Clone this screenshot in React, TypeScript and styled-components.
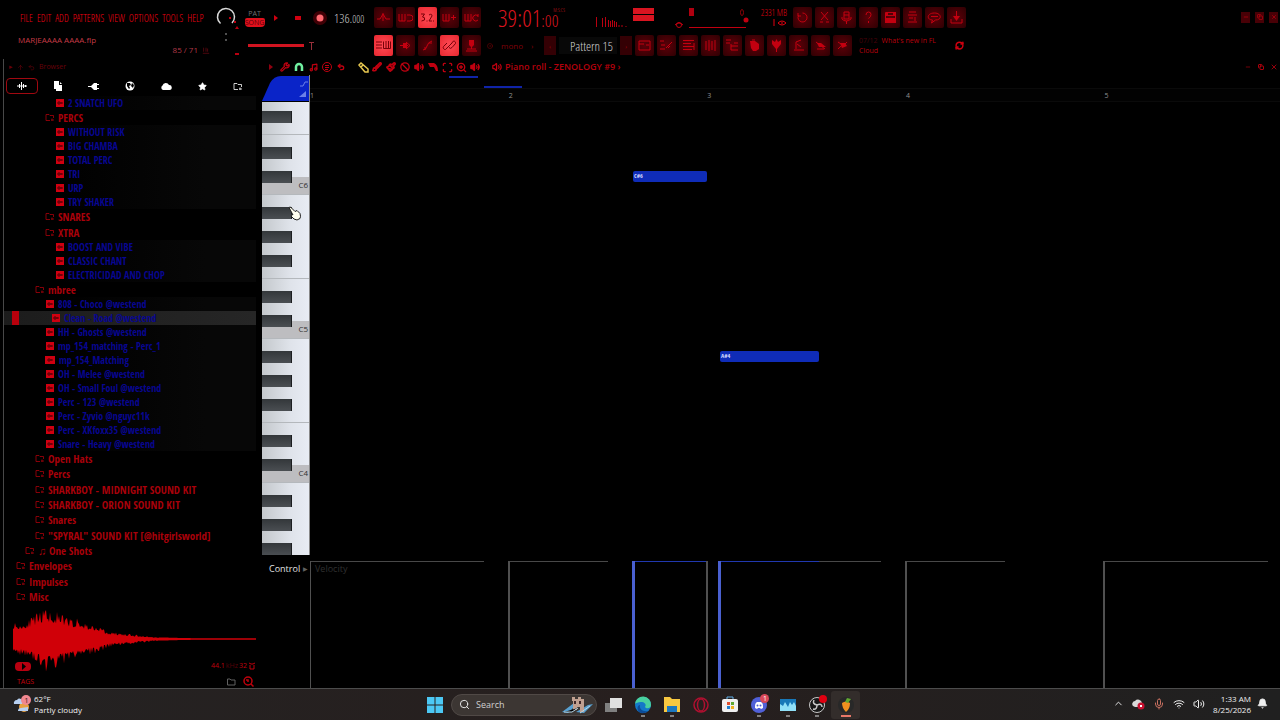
import React from "react";
import styled, { createGlobalStyle } from "styled-components";
import {
  ArrowUp, Ban, Bell, Brush, ChevronUp, Copy, Globe, Mic, Minus, Music, Paintbrush, RefreshCw, Scan, Search,
  Star, Undo2, Volume2, Wifi, Wrench, X, ZoomIn, CircleDot,
} from "lucide-react";

const NARROW = '"Open Sans Condensed Light", "Open Sans Condensed", "Liberation Sans Narrow", sans-serif';
const NARROW_BOLD = '"Open Sans Condensed", "Liberation Sans Narrow", sans-serif';
const UI = '"Open Sans", "Noto Sans", sans-serif';

const GlobalStyle = createGlobalStyle`
  * { box-sizing: border-box; }
  body { margin: 0; background: #000; font-family: ${NARROW}; font-weight: 300; }
  button { margin: 0; padding: 0; border: 0; background: none; color: inherit; font: inherit; cursor: pointer; }
  ul { margin: 0; padding: 0; list-style: none; }
  svg { display: block; flex: none; }
`;

const Page = styled.div`
  display: flex;
  flex-direction: column;
  min-height: 100vh;
  overflow: hidden;
  background: #000;
  color: #c0000c;
`;

/* ---------- header ---------- */

const Header = styled.header`
  display: flex;
  height: 59px;
  flex: none;
`;

const TitleBlock = styled.div`
  width: 212px;
  padding: 10px 0 0 20px;
`;

const Menu = styled.nav`
  display: flex;
  gap: 4px;
  height: 15px;
  align-items: center;
  color: #f00012;
  font-size: 10px;
  white-space: nowrap;
`;

const ProjectName = styled.div`
  margin: 9px 0 0 -2px;
  font: 8px/12px ${UI};
  color: #c43a46;
`;

const Hint = styled.div`
  display: flex;
  justify-content: flex-end;
  align-items: center;
  gap: 4px;
  padding-right: 2px;
  margin-top: -2px;
  font: 8px/12px ${UI};
  color: #b03848;
`;

const Transport = styled.div`
  display: flex;
  flex-direction: column;
  gap: 7px;
  width: 132px;
  padding: 7px 0 0 2px;
`;

const TransportRow = styled.div`
  display: flex;
  align-items: center;
  height: 21px;
`;

const ModeSwitch = styled.button`
  display: flex;
  flex-direction: column;
  align-items: center;
  width: 21px;
  font: 7px/9px ${UI};
  color: #707070;
`;

const ModeOn = styled.span`
  width: 20px;
  border-radius: 2px 2px 4px 4px;
  background: #e0101c;
  color: #5c0008;
`;

const RoundButton = styled.button`
  display: grid;
  place-items: center;
  width: 22px;
  height: 20px;
  color: #d00010;
`;

const Tempo = styled.div`
  margin-left: 3px;
  color: #c8c8c8;
  font-size: 13px;
  small { font-size: 10px; }
`;

const PitchSlider = styled.input`
  appearance: none;
  width: 56px;
  height: 3px;
  margin: 0 4px 0 4px;
  background: #d01420;
  &::-webkit-slider-thumb { appearance: none; width: 1px; height: 3px; background: #d01420; }
`;

const ToolGrid = styled.div`
  display: grid;
  grid-template-columns: repeat(5, 19px);
  grid-auto-rows: 21px;
  gap: 7px 3px;
  padding-top: 7px;
  width: 111px;
`;

const ToolButton = styled.button<{ $on?: boolean }>`
  display: grid;
  place-items: center;
  width: 19px;
  height: 21px;
  border-radius: 2px;
  color: ${(p) => (p.$on ? "#780008" : "#c40010")};
  background: ${(p) =>
    p.$on ? "radial-gradient(#ff4a54, #e82830)" : "radial-gradient(#5c0008, #2e0003)"};
`;

const Panels = styled.div`
  display: flex;
  flex-direction: column;
  gap: 7px;
  padding-top: 7px;
`;

const PanelRow = styled.div`
  display: flex;
  align-items: center;
  height: 21px;
  gap: 3px;
`;

const Clock = styled.div`
  display: flex;
  width: 104px;
  padding-left: 13px;
  color: #d8141e;
  font-size: 24px;
  line-height: 21px;
`;

const ClockTail = styled.div`
  display: flex;
  flex-direction: column;
  small { font-size: 17px; line-height: 15px; }
  span { padding-left: 12px; font-size: 5px; line-height: 6px; }
`;

const Meter = styled.div`
  display: grid;
  gap: 1px;
  width: 21px;
  margin: 0 8px 7px 2px;
`;

const MeterBar = styled.div`
  height: 6px;
  background: #d81420;
`;

const Memory = styled.div`
  width: 35px;
  margin-right: 3px;
  text-align: right;
  white-space: nowrap;
  color: #e00010;
  font-size: 9px;
  line-height: 10px;
  svg { margin: 1px 0 0 auto; }
`;

const SnapSelect = styled.button`
  display: flex;
  align-items: center;
  gap: 8px;
  width: 56px;
  padding-left: 2px;
  color: #800008;
  font: 8px/12px ${UI};
`;

const StepButton = styled.button`
  width: 12px;
  height: 19px;
  background: #340004;
  color: #a00008;
  font-size: 8px;
`;

const PatternName = styled.button`
  width: 58px;
  height: 17px;
  padding-right: 4px;
  background: #080808;
  color: #d0d0d0;
  text-align: right;
  white-space: nowrap;
  font-size: 13px;
`;

const News = styled.div`
  width: 90px;
  padding-left: 4px;
  color: #b8000c;
  font: 7px/10px ${UI};
`;

const NewsLine = styled.div`
  display: flex;
  gap: 4px;
  white-space: nowrap;
  time { color: #48000a; }
`;

const WindowButtons = styled.div<{ $tight?: boolean }>`
  display: flex;
  align-items: center;
  gap: ${(p) => (p.$tight ? "4px" : "5px")};
  height: ${(p) => (p.$tight ? "16px" : "12px")};
  margin: ${(p) => (p.$tight ? "0 2px 0 auto" : "11px 2px 0 auto")};
  color: #e00012;
  button { width: 9px; height: 11px; display: grid; place-items: center; background: ${(p) => (p.$tight ? "none" : "#480006")}; }
`;

/* ---------- browser ---------- */

const Workspace = styled.main`
  display: flex;
  flex: 1;
`;

const Browser = styled.aside`
  display: flex;
  flex-direction: column;
  flex: none;
  width: 259px;
  margin-left: 3px;
  border-left: 1px solid #484848;
`;

const BrowserTitle = styled.div`
  display: flex;
  align-items: center;
  gap: 4px;
  height: 16px;
  padding-left: 5px;
  color: #68000a;
  font: 7px/16px ${UI};
`;

const Tabs = styled.div`
  display: flex;
  height: 21px;
  padding-top: 3px;
`;

const Tab = styled.button<{ $on?: boolean }>`
  display: grid;
  place-items: center;
  width: 32px;
  height: 16px;
  margin: 0 2px;
  border: 1px solid ${(p) => (p.$on ? "#a00810" : "transparent")};
  border-radius: 4px;
  color: #fff;
`;

const Tree = styled.ul`
  flex: 1;
  width: 252px;
`;

const Group = styled.ul<{ $height: number }>`
  display: flex;
  flex-direction: column;
  height: ${(p) => p.$height}px;
`;

const FolderRow = styled.button<{ $depth: number }>`
  display: flex;
  align-items: center;
  gap: 3px;
  width: 100%;
  height: 15px;
  padding-left: ${(p) => p.$depth}px;
  color: #a8000a;
  font: bold 11px/15px ${NARROW_BOLD};
  white-space: nowrap;
`;

const FolderItem = styled.li`
  display: flex;
  align-items: center;
  flex: 1;
`;

const FileRow = styled.button<{ $depth: number; $selected?: boolean }>`
  display: flex;
  align-items: center;
  gap: 4px;
  width: 100%;
  height: 14px;
  padding-left: ${(p) => p.$depth}px;
  background: ${(p) => (p.$selected ? "linear-gradient(90deg, #1c1c1c, #262626)" : "linear-gradient(90deg, #000 20%, #070707 80%)")};
  color: #080690;
  font: bold 10px/14px ${NARROW_BOLD};
  white-space: nowrap;
`;

const SelectMark = styled.span`
  width: 7px;
  height: 14px;
  margin-right: 29px;
  background: #b8000c;
`;

const FileBadge = styled.span<{ $wide?: boolean }>`
  display: grid;
  place-items: center;
  width: ${(p) => (p.$wide ? 10 : 8)}px;
  height: 8px;
  background: #d00010;
  color: #500006;
`;

const WavePanel = styled.div`
  padding-left: 9px;
  height: 67px;
`;

const BrowserFoot = styled.div`
  display: flex;
  align-items: center;
  gap: 7px;
  height: 16px;
  padding: 3px 8px 0 13px;
  font: 7px/12px ${UI};
  span { margin-right: auto; }
`;

const WaveInfo = styled.div`
  display: flex;
  align-items: center;
  justify-content: space-between;
  height: 10px;
  margin: -13px 0 1px;
  padding: 0 6px 0 11px;
  font: 7px/10px ${UI};
`;

const WaveRate = styled.span`
  display: flex;
  align-items: center;
  gap: 1px;
  i { color: #580008; font-style: normal; }
`;

/* ---------- piano roll ---------- */

const Roll = styled.section`
  display: flex;
  flex-direction: column;
  flex: 1;
  min-width: 0;
`;

const RollBar = styled.div`
  display: flex;
  align-items: center;
  height: 16px;
  padding-left: 2px;
  color: #c00010;
`;

const RollTool = styled.button<{ $tone?: string; $gap?: boolean }>`
  display: grid;
  place-items: center;
  width: 14px;
  height: 14px;
  margin-left: ${(p) => (p.$gap ? 8 : 0)}px;
  color: ${(p) => p.$tone || "#c00010"};
`;

const RollTitle = styled.h1`
  margin: 0 0 0 1px;
  color: #b4000c;
  font: 600 9px/14px ${UI};
  white-space: nowrap;
`;

const RollBody = styled.div`
  display: flex;
  flex: 1;
`;

const KeyColumn = styled.div`
  position: relative;
  width: 48px;
  flex: none;
  border-right: 1px solid #888;
  overflow: hidden;
`;

const Corner = styled.div`
  height: 27px;
`;

const HandCursor = styled.svg`
  position: absolute;
  top: 131px;
  left: 26px;
`;

const Keys = styled.div`
  height: 453px;
  overflow: hidden;
  background: linear-gradient(90deg, #c4c8cc, #dfe3ea 60%, #e8ecf4);
`;

const Key = styled.div<{ $kind: string; $short?: boolean }>`
  display: flex;
  align-items: center;
  justify-content: flex-end;
  height: ${(p) => (p.$short ? 9 : 12)}px;
  padding-right: 1px;
  border-bottom: ${(p) => (p.$kind === "edge" || p.$kind === "c" ? "1px solid #b4b8bc" : "0")};
  background: ${(p) =>
    p.$kind === "c" ? "#bdbdc0" : p.$kind === "sharpC" ? "linear-gradient(transparent 50%, #bdbdc0 50%)" : "none"};
  color: #303030;
  font: 8px/8px ${UI};
`;

const KeyLabel = styled.span`
  margin-top: -8px;
`;

const BlackKey = styled.div`
  width: 30px;
  height: 12px;
  margin-right: auto;
  border-right: 1px solid #1c1e20;
  background: linear-gradient(#33373a, #4a4e52);
`;

const Canvas = styled.div`
  position: relative;
  flex: 1;
`;

const Ruler = styled.div`
  display: flex;
  height: 27px;
  padding-top: 14px;
  border-bottom: 1px solid #0a0a0a;
  background: linear-gradient(#000 13px, #0a0a0a 13px, #0a0a0a 14px, #020202 14px);
`;

const Bar = styled.span`
  flex: 0 0 20.48%;
  color: #909090;
  font: 7px/14px ${UI};
`;

const Note = styled.div`
  position: absolute;
  height: 11px;
  padding-left: 1px;
  border-radius: 2px;
  background: #0f2cb8;
  color: #d8dcff;
  font: bold 6px/11px ${NARROW_BOLD};
`;

const MiniNote = styled.div`
  position: absolute;
  height: 2px;
  background: #1024a8;
`;

const Velocity = styled.div`
  display: flex;
  height: 133px;
`;

const ControlLabel = styled.button`
  display: flex;
  flex: none;
  align-items: center;
  gap: 3px;
  width: 48px;
  height: 14px;
  margin-top: 7px;
  padding-left: 7px;
  color: #e0e0e0;
  font: 9px/14px ${UI};
  i { color: #606060; font-size: 6px; font-style: normal; }
`;

const VelocityCanvas = styled.div`
  position: relative;
  flex: 1;
  padding: 7px 0 0 5px;
  color: #303030;
  font: 9px/14px ${UI};
`;

const Stem = styled.div<{ $blue?: boolean; $thin?: boolean }>`
  position: absolute;
  top: 6px;
  bottom: 0;
  border-left: ${(p) => (p.$thin ? 1 : p.$blue ? 3 : 2)}px solid ${(p) => (p.$blue ? "#4a60d0" : "#505050")};
`;

const Lid = styled.div<{ $blue?: boolean }>`
  position: absolute;
  top: 6px;
  height: 1px;
  background: ${(p) => (p.$blue ? "#2038b0" : "#484848")};
`;

/* ---------- taskbar ---------- */

const Taskbar = styled.footer`
  display: grid;
  grid-template-columns: 1fr auto 1fr;
  align-items: center;
  flex: none;
  height: 32px;
  border-top: 1px solid #4c4c4c;
  background: linear-gradient(90deg, #242222, #271f1e 50%, #202020);
  color: #f0f0f0;
  font: 8px/11px ${UI};
`;

const Weather = styled.button`
  display: flex;
  align-items: center;
  gap: 2px;
  padding: 0 0 2px 12px;
  text-align: left;
`;

const Apps = styled.div`
  display: flex;
  align-items: center;
`;

const AppButton = styled.button<{ $active?: boolean }>`
  display: grid;
  place-items: center;
  width: 29px;
  height: 28px;
  border-radius: 3px;
  background: ${(p) => (p.$active ? "#332d2b" : "none")};
`;

const SearchBox = styled.label`
  display: flex;
  align-items: center;
  gap: 6px;
  width: 146px;
  height: 22px;
  margin: 0 2px;
  padding-left: 7px;
  border: 1px solid #504946;
  border-radius: 11px;
  background: #3c3633;
`;

const SearchInput = styled.input`
  width: 80px;
  border: 0;
  padding: 0;
  background: none;
  color: #e0e0e0;
  font: 9px/14px ${UI};
  &::placeholder { color: #d0d0d0; opacity: 1; }
`;

const Tray = styled.div`
  display: flex;
  align-items: center;
  justify-content: flex-end;
  gap: 8px;
  padding: 0 12px 2px 0;
`;

const DateAndAlerts = styled.div`
  display: flex;
  align-items: center;
  gap: 6px;
  text-align: right;
`;

/* ---------- data ---------- */

const menuItems = ["FILE", "EDIT", "ADD", "PATTERNS", "VIEW", "OPTIONS", "TOOLS", "HELP"];

const percs = ["WITHOUT RISK", "BIG CHAMBA", "TOTAL PERC", "TRI", "URP", "TRY SHAKER"];
const xtra = ["BOOST AND VIBE", "CLASSIC CHANT", "ELECTRICIDAD AND CHOP"];
const mbree = [
  "808 - Choco @westend", "Clean - Road @westend", "HH - Ghosts @westend", "mp_154_matching - Perc_1",
  "mp_154_Matching", "OH - Melee @westend", "OH - Small Foul @westend", "Perc - 123 @westend",
  "Perc - Zyvio @nguyc11k", "Perc - XKfoxx35 @westend", "Snare - Heavy @westend",
];
const lowerFolders: [number, string][] = [
  [31, "Open Hats"], [31, "Percs"], [31, "SHARKBOY - MIDNIGHT SOUND KIT"], [31, "SHARKBOY - ORION SOUND KIT"],
  [31, "Snares"], [31, '"SPYRAL" SOUND KIT [@hitgirlsworld]'], [21, "♫ One Shots"], [12, "Envelopes"],
  [12, "Impulses"], [12, "Misc"],
];

const octave = ["B", "A#", "A", "G#", "G", "F#", "F", "E", "D#", "D", "C#", "C"];

function keyRows() {
  const rows: { kind: string; black: boolean; label?: string }[] = [];
  let pitch = 4;
  let oct = 6;
  for (let i = 0; i < 38; i++) {
    const name = octave[pitch];
    const kind = name === "C" ? "c" : name === "C#" ? "sharpC" : name === "F" ? "edge" : "plain";
    rows.push({ kind, black: name.includes("#"), label: name === "C" ? `C${oct}` : undefined });
    if (++pitch === 12) { pitch = 0; oct--; }
  }
  return rows;
}

function wavePath() {
  const env: [number, number][] = [
    [0, 18], [10, 18], [20, 23], [32, 31], [38, 31], [46, 26], [58, 22], [68, 20], [76, 16], [86, 14], [94, 8], [110, 6],
    [125, 4], [145, 2], [180, 1], [243, 1],
  ];
  const top: string[] = [];
  const bottom: string[] = [];
  let seed = 11;
  const rnd = () => { seed = (seed * 16807) % 2147483647; return seed / 2147483647; };
  for (let x = 0; x <= 243; x++) {
    const k = Math.max(1, env.findIndex((e) => e[0] >= x));
    const [x0, a0] = env[k - 1];
    const [x1, a1] = env[k];
    const a = a0 + ((a1 - a0) * (x - x0)) / (x1 - x0);
    const up = x > 145 ? a * 0.8 : a * (0.55 + 0.45 * rnd() ** 2);
    const down = x > 145 ? a * 0.8 : a * (0.55 + 0.5 * rnd() ** 2);
    top.push(`${x} ${(32 - up).toFixed(1)}`);
    bottom.unshift(`${x} ${(32 + down).toFixed(1)}`);
  }
  return `M${top.join("L")}L${bottom.join("L")}Z`;
}

/* ---------- pieces ---------- */

const FolderIcon = () => (
  <svg width="10" height="9" viewBox="0 0 10 9" fill="none" stroke="currentColor" strokeWidth="0.800">
    <path d="M5 7.500H1V1.500H4L5 2.500H8.500V5M7 5.500V8M6 7h3" />
  </svg>
);

const WaveGlyph = () => (
  <svg width="6" height="6" viewBox="0 0 6 6" stroke="currentColor"><path d="M0 3h6M2 1v4M4 2v2" /></svg>
);

const Folder = ({ depth, name }: { depth: number; name: string }) => (
  <FolderItem><FolderRow $depth={depth}><FolderIcon />{name}</FolderRow></FolderItem>
);

const File = ({ depth, name, selected, wide }: { depth: number; name: string; selected?: boolean; wide?: boolean }) => (
  <li>
    <FileRow $depth={selected ? 8 : depth} $selected={selected}>
      {selected && <SelectMark />}
      <FileBadge $wide={wide}><WaveGlyph /></FileBadge>
      {name}
    </FileRow>
  </li>
);

type Tool = { label: string; line: string; fill?: string; on?: boolean };

const Glyph = ({ tool }: { tool: Tool }) => (
  <svg width="15" height="15" viewBox="0 0 15 15" fill="none" stroke="currentColor">
    <path d={tool.line} />
    {tool.fill && <path d={tool.fill} fill="currentColor" stroke="none" />}
  </svg>
);

const Tools = ({ items }: { items: Tool[] }) => (
  <>{items.map((t) => <ToolButton key={t.label} $on={t.on} aria-label={t.label}><Glyph tool={t} /></ToolButton>)}</>
);

const recordTools: Tool[] = [
  { label: "Metronome", line: "M1 9h3l3-5 3 5h4M7 3v8" },
  { label: "Wait for input", line: "M1 4v7h6V4M4 4v7M9 5h3a3 3 0 0 1 0 6H9" },
  { label: "Countdown", line: "M1 4h3.500l-2 3q3 0 2 3l-3 1M6.500 11h1M9 5q3-2 3 1l-3 5h3M13 11h1", on: true },
  { label: "Blend recording", line: "M1 4v7h6V4M4 4v7M9 7.500h5M11.500 5v5" },
  { label: "Loop recording", line: "M1 4v7h6V4M4 4v7M14 6a3 3 0 1 0 0 4M14 4v3" },
  { label: "Typing keyboard", line: "M0 4h6M0 7h6M0 10h6M7.500 3.500v7h7v-7M10 3v7M12.500 3v7", on: true },
  { label: "Step edit", line: "M2 7.500h8M8 4l4 3.500L8 11", fill: "M5 5h4v5H5z" },
  { label: "Scroll lock", line: "M3 12q3 0 4-4t5-5M9 5h3M5 9v3" },
  { label: "Group notes", line: "M6 9L3.500 11.500a2 2 0 0 1-2-3L5 5M9 6l2.500-3a2 2 0 0 1 2 2.500L10 9.500a2 2 0 0 1-3 0M5 10l5-5", on: true },
  { label: "Multilink", line: "M3 11h9M2 13h11M7.500 8v3", fill: "M5 2h5v5l-2 2H7L5 7z" },
];

const fileTools: Tool[] = [
  { label: "Undo history", line: "M7.500 3a4.500 4.500 0 1 1-4 2.500M3 3v3h3" },
  { label: "Cut", line: "M4 2l7 8M11 2L4 10M3 12h3M9 12h3" },
  { label: "Audio input", line: "M5 2h5v7H5zM3 7v2q4 4 9 0V7M7.500 11v3M5 5h5" },
  { label: "Help", line: "M5 5q0-3 2.500-3t2.500 2.500-2.500 4M7.500 11v2" },
  { label: "Save", line: "M2.500 2.500h10v10h-10z", fill: "M2 8h11v5H2zM3 2h2v4H3zM10 2h3v4h-3zM5 5h5v1H5z" },
  { label: "Render", line: "M4 2h7M3 5h9M4 8h4M3 12h9M10 7v4" },
  { label: "Chat", line: "M7.500 3c-8 0-8 7-2 7l-1 3 4-3c7 0 6-7-1-7zM4 6.500h7" },
  { label: "Download", line: "M2 9v4h11V9M7.500 1v6", fill: "M4 6h7l-3.500 5z" },
];

const viewTools: Tool[] = [
  { label: "Playlist", line: "M2 3h11v9H2zM2 6h5M9 7h3" },
  { label: "Piano roll", line: "M1 3h4M2 7h4M1 11h5M7 10l6-6M9 10l2-2" },
  { label: "Channel rack", line: "M2 2.500h11M2 5.500h8M2 8.500h11M2 11.500h9M13 5v7" },
  { label: "Mixer", line: "M3 3v9M6 2v11M9 3v9M12 2v11" },
  { label: "Browser", line: "M1 2h5M1 5h4M6 6v6M6 8h7M6 12h7M9 5h4" },
  { label: "Plugin picker", line: "M5 2h3", fill: "M3 3h5l4 3v5l-3 2H6L4 10z" },
  { label: "Tempo tapper", line: "M7.500 9v5", fill: "M3 2l3 2 1.500-3L9 4l3-2v4L8 11H7L3 6z" },
  { label: "Touch controller", line: "M3 12h10M5 11V4l5-2M6 6l4 3" },
  { label: "Remove", line: "M3 4l9 7M4 11h7", fill: "M4 5h4l5 4H6z" },
  { label: "Close all", line: "M3 4l3 2M3 11l3-3M12 4L8 8", fill: "M5 5h5l2 3-5 2z" },
];

const pct = (x: number) => `${((x - 310) / 9.7).toFixed(3)}%`;
const span = (w: number) => `${(w / 9.7).toFixed(3)}%`;

export default function App() {
  return (
    <>
      <GlobalStyle />
      <Page>
        <Header>
          <TitleBlock>
            <Menu>{menuItems.map((m) => <button key={m}>{m}</button>)}</Menu>
            <ProjectName>MARJEAAAA AAAA.flp</ProjectName>
            <Hint>
              85 / 71
              <svg width="8" height="9" viewBox="0 0 10 9" stroke="#600810" fill="none"><path d="M1 8h8M2 1v5M5 1v5M7 2v4" /></svg>
            </Hint>
          </TitleBlock>
          <svg width="30" height="59" viewBox="0 0 30 59">
            <path d="M8.500 23.500A8.500 8.500 0 1 1 20 23" fill="none" stroke="#d8d8d8" strokeWidth="1.500" />
            <path d="M17 18h2M22 22h2" stroke="#c00010" strokeWidth="2" />
            <path d="M13 34h2M13 40h2" stroke="#a0a0a0" />
            <path d="M23 29l2-3 2 3zM23 53h4v2h-4z" fill="#b80010" />
          </svg>
          <Transport>
            <TransportRow>
              <ModeSwitch>PAT<ModeOn>SONG</ModeOn></ModeSwitch>
              <RoundButton aria-label="Play"><svg width="6" height="8"><path d="M1 1l4 3-4 3z" fill="currentColor" /></svg></RoundButton>
              <RoundButton aria-label="Stop"><svg width="6" height="6"><path d="M0 1h6v4H0z" fill="currentColor" /></svg></RoundButton>
              <RoundButton aria-label="Record">
                <svg width="16" height="16"><circle cx="8" cy="8" r="7" fill="#400006" /><circle cx="8" cy="8" r="3.500" fill="#ff6870" /></svg>
              </RoundButton>
              <Tempo>136.<small>000</small></Tempo>
            </TransportRow>
            <TransportRow>
              <PitchSlider type="range" aria-label="Master pitch" />
              <svg width="7" height="10" viewBox="0 0 7 10" stroke="#98303a" fill="none"><path d="M1 1.500h5M3.500 1v8" /></svg>
            </TransportRow>
          </Transport>
          <ToolGrid><Tools items={recordTools} /></ToolGrid>
          <Panels>
            <PanelRow>
              <Clock>39:01<ClockTail><span>M:S:CS</span><small>:00</small></ClockTail></Clock>
              <svg width="36" height="21" viewBox="0 0 36 21" stroke="#b80010">
                <path d="M4.500 10v10M10.500 11v9M13.500 10v10M16.500 13v7M18.500 14v6M20.500 13v7M22.500 14v6M24.500 15v5M27 20v-2M30 20v-2M34 20v-1" />
              </svg>
              <Meter><MeterBar /><MeterBar /></Meter>
              <svg width="84" height="21" viewBox="0 0 84 21" fill="none" stroke="#c00010">
                <path d="M24 1h5v8h-5z" fill="#b00010" stroke="none" />
                <circle cx="14" cy="18" r="2.500" /><path d="M10 18q4-4 8 0" />
                <path d="M24 20.500h57" /><circle cx="81" cy="13" r="2.500" fill="#c00010" stroke="none" />
                <ellipse cx="77" cy="5.500" rx="1.500" ry="3" stroke="#900008" />
              </svg>
              <Memory>
                2331 MB
                <svg width="14" height="8" viewBox="0 0 14 8" fill="none" stroke="currentColor"><path d="M1 0v7M5 4q4-4 8 0q-4 4-8 0zM8 4h2" /></svg>
              </Memory>
              <Tools items={fileTools} />
            </PanelRow>
            <PanelRow>
              <SnapSelect><CircleDot size={6} />mono<span>›</span></SnapSelect>
              <StepButton aria-label="Previous pattern">‹</StepButton>
              <PatternName>Pattern 15</PatternName>
              <StepButton aria-label="Next pattern">›</StepButton>
              <Tools items={viewTools} />
              <News>
                <NewsLine><time>07/12</time><span>What's new in FL</span></NewsLine>
                <NewsLine>Cloud</NewsLine>
              </News>
              <RoundButton aria-label="Refresh news"><RefreshCw size={9} strokeWidth={4} /></RoundButton>
            </PanelRow>
          </Panels>
          <WindowButtons>
            <button aria-label="Minimise"><Minus size={6} /></button>
            <button aria-label="Restore"><Copy size={6} /></button>
            <button aria-label="Close"><X size={6} /></button>
          </WindowButtons>
        </Header>

        <Workspace>
          <Browser>
            <BrowserTitle><span>▸</span><ArrowUp size={7} /><Undo2 size={7} />Browser</BrowserTitle>
            <Tabs>
              <Tab $on aria-label="Sounds"><svg width="12" height="10" viewBox="0 0 12 10" stroke="currentColor"><path d="M1 5h10M3.500 3v4M5.500 1v8M7.500 3v4M9.500 4v2" /></svg></Tab>
              <Tab aria-label="Files"><svg width="10" height="10" viewBox="0 0 10 10" fill="currentColor"><path d="M1 0h5v1H2v7H1zM2 1h4v3h3v6H3V8H2zM7 1l2 2H7z" /></svg></Tab>
              <Tab aria-label="Plugins"><svg width="12" height="9" viewBox="0 0 12 9" fill="currentColor"><path d="M0 4h3l3-3h3v7H6L3 5H0zM9 2h2v1H9zM9 6h2v1H9z" /></svg></Tab>
              <Tab aria-label="Online"><svg width="10" height="10" viewBox="0 0 10 10"><circle cx="5" cy="5" r="4.500" fill="#fff" /><path d="M2 2l3 0 1 2-2 1 1 2-1 1-2-3zM7 2l2 2-1 3-2-2z" fill="#000" /></svg></Tab>
              <Tab aria-label="Cloud"><svg width="12" height="9" viewBox="0 0 12 9" fill="currentColor"><path d="M3 8a2.500 2.500 0 0 1-.5-4.500 3.500 3.500 0 0 1 6.500-.5 2.500 2.500 0 0 1 .5 5z" /></svg></Tab>
              <Tab aria-label="Starred"><Star size={9} fill="#fff" /></Tab>
              <Tab aria-label="Folders"><FolderIcon /></Tab>
            </Tabs>
            <Tree>
              <File depth={52} name="2 SNATCH UFO" />
              <li><Group $height={15}><Folder depth={41} name="PERCS" /></Group></li>
              {percs.map((n) => <File key={n} depth={52} name={n} />)}
              <li><Group $height={31}><Folder depth={41} name="SNARES" /><Folder depth={41} name="XTRA" /></Group></li>
              {xtra.map((n) => <File key={n} depth={52} name={n} />)}
              <li><Group $height={15}><Folder depth={31} name="mbree" /></Group></li>
              {mbree.map((n, i) => <File key={n} depth={i === 4 ? 41 : 42} name={n} selected={i === 1} wide={i === 4} />)}
              <li><Group $height={153}>{lowerFolders.map(([d, n]) => <Folder key={n} depth={d} name={n} />)}</Group></li>
            </Tree>
            <WavePanel><svg width="243" height="67" viewBox="0 0 243 67"><path d={wavePath()} fill="#d00008" /></svg></WavePanel>
            <WaveInfo>
              <svg width="16" height="9" viewBox="0 0 16 9"><rect width="16" height="9" rx="4" fill="#b80010" /><path d="M7 1l4 3.500-4 3.500z" /></svg>
              <WaveRate>44.1<i>kHz</i>32<svg width="8" height="8" viewBox="0 0 8 8" fill="none" stroke="currentColor"><path d="M1 1l2 1h2l2-1M2 3v4h4V3" /></svg></WaveRate>
            </WaveInfo>
            <BrowserFoot><span>TAGS</span><svg width="9" height="8" viewBox="0 0 9 8" fill="none" stroke="#606060"><path d="M.5 7V1H3l1 1h4v5z" /></svg><svg width="11" height="11" viewBox="0 0 11 11" fill="none" stroke="currentColor" strokeWidth="1.500"><circle cx="5" cy="5" r="4" /><path d="M8 8l2.500 2.500M3 4h2v2" /></svg></BrowserFoot>
          </Browser>

          <Roll>
            <RollBar>
              <RollTool aria-label="Menu"><svg width="4" height="6"><path d="M0 0l4 3-4 3z" fill="#900010" /></svg></RollTool>
              <RollTool aria-label="Tools"><Wrench size={10} strokeWidth={3} /></RollTool>
              <RollTool aria-label="Snap" $tone="#70f0a0"><svg width="10" height="10" viewBox="0 0 10 10" fill="none" stroke="currentColor" strokeWidth="2.500"><path d="M2 9V5a3 3 0 0 1 6 0v4" /></svg></RollTool>
              <RollTool aria-label="Stamp"><Music size={9} strokeWidth={3} /></RollTool>
              <RollTool aria-label="Target"><svg width="10" height="10" viewBox="0 0 10 10" fill="none" stroke="currentColor"><circle cx="5" cy="5" r="4.500" /><path d="M3 3.500h4M3 5.500h4M3 7.500h3" /></svg></RollTool>
              <RollTool aria-label="Undo"><Undo2 size={8} strokeWidth={4} /></RollTool>
              <RollTool aria-label="Draw" $tone="#e8c850" $gap><svg width="11" height="11" viewBox="0 0 11 11" fill="none" stroke="currentColor" strokeWidth="1.500"><path d="M1 3l2-2 7 6v3H7zM3 5l2-2" /></svg></RollTool>
              <RollTool aria-label="Paint"><Brush size={10} strokeWidth={4} /></RollTool>
              <RollTool aria-label="Paint sequence"><Paintbrush size={10} strokeWidth={4} /></RollTool>
              <RollTool aria-label="Delete"><Ban size={10} strokeWidth={3} /></RollTool>
              <RollTool aria-label="Mute"><Volume2 size={10} fill="currentColor" strokeWidth={3} /></RollTool>
              <RollTool aria-label="Slice"><svg width="10" height="10" viewBox="0 0 10 10" fill="currentColor"><path d="M0 1h6q4 2 4 8H8L6 5H2z" /></svg></RollTool>
              <RollTool aria-label="Select"><Scan size={11} strokeWidth={3} /></RollTool>
              <RollTool aria-label="Zoom"><ZoomIn size={11} strokeWidth={3} /></RollTool>
              <RollTool aria-label="Playback"><Volume2 size={10} fill="currentColor" strokeWidth={3} /></RollTool>
              <RollTool aria-label="Preview" $gap><Volume2 size={10} strokeWidth={3} /></RollTool>
              <RollTitle>Piano roll - ZENOLOGY #9 ›</RollTitle>
              <WindowButtons $tight>
                <button aria-label="Collapse"><Minus size={6} /></button>
                <button aria-label="Detach"><Copy size={6} strokeWidth={3} /></button>
                <button aria-label="Close piano roll"><X size={8} /></button>
              </WindowButtons>
            </RollBar>
            <RollBody>
              <KeyColumn>
                <Corner>
                  <svg width="47" height="27" viewBox="0 0 47 27" fill="none" stroke="#6c80e8">
                    <path d="M0 26L8 8Q12 1 19 1H47V26Z" fill="#0a24c8" stroke="none" />
                    <path d="M38 11h3l2-4h3" /><path d="M37 22l7-6v6z" fill="#6c80e8" stroke="none" />
                  </svg>
                </Corner>
                <Keys>
                  {keyRows().map((k, i) => (
                    <Key key={i} $kind={k.kind} $short={i === 0}>
                      {k.black && <BlackKey />}
                      {k.label && <KeyLabel>{k.label}</KeyLabel>}
                    </Key>
                  ))}
                </Keys>
                <HandCursor width="14" height="15" viewBox="0 0 14 15">
                  <path d="M1 1.500q1-1 2 0l4 4 2-1 3 3q1 3 0 5l-3 1.500-3-1-3-3 1-1.500 1 .5z" fill="#fffff0" stroke="#202020" />
                </HandCursor>
              </KeyColumn>
              <Canvas>
                <Ruler>{[1, 2, 3, 4, 5].map((n) => <Bar key={n}>{n}</Bar>)}</Ruler>
                <MiniNote style={{ left: pct(449), width: span(29), top: 1 }} />
                <MiniNote style={{ left: pct(484), width: span(38), top: 11 }} />
                <Note style={{ left: pct(633), width: span(74), top: 96 }}>C#6</Note>
                <Note style={{ left: pct(720), width: span(99), top: 276 }}>A#4</Note>
              </Canvas>
            </RollBody>
            <Velocity>
              <ControlLabel>Control <i>▶</i></ControlLabel>
              <VelocityCanvas>
                Velocity
                {[[310, 174], [509, 99], [819, 62], [906, 99], [1105, 163]].map(([x, w]) => <Lid key={x} style={{ left: pct(x), width: span(w) }} />)}
                {[[633, 75], [720, 99]].map(([x, w]) => <Lid key={x} $blue style={{ left: pct(x), width: span(w) }} />)}
                {[310, 508, 706, 905, 1103].map((x, i) => <Stem key={x} $thin={i === 0} style={{ left: pct(x) }} />)}
                {[632, 718].map((x) => <Stem key={x} $blue style={{ left: pct(x) }} />)}
              </VelocityCanvas>
            </Velocity>
          </Roll>
        </Workspace>

        <Taskbar>
          <Weather>
            <svg width="20" height="20" viewBox="0 0 20 20">
              <circle cx="12" cy="13" r="5" fill="#e8a040" />
              <path d="M2 10a3 3 0 0 1 3-4a3 3 0 0 1 5 4zM6 17a3 3 0 0 1 3-3l7-1v4z" fill="#b8d0f0" />
              <circle cx="14" cy="6" r="5" fill="#f08890" /><text x="12.500" y="9" fontSize="7" fill="#301010">1</text>
            </svg>
            <span>62°F<br />Partly cloudy</span>
          </Weather>
          <Apps>
            <AppButton aria-label="Start"><svg width="16" height="16" fill="#4cc8f4"><path d="M0 0h7.500v7.500H0zM8.500 0H16v7.500H8.500zM0 8.500h7.500V16H0zM8.500 8.500H16V16H8.500z" /></svg></AppButton>
            <SearchBox>
              <Search size={11} />
              <SearchInput placeholder="Search" aria-label="Search" />
              <svg width="32" height="18" viewBox="0 0 32 18">
                <path d="M0 16l12-9h4L6 17zM14 16l12-7 5-1-9 9z" fill="#58a0d0" />
                <path d="M10 5V1h3v2h3V1h3v2h3v13h-4v-5h-3v3h-4V5z" fill="#c0a090" /><path d="M12 5h2v3h-2zM17 5h2v3h-2z" fill="#402828" />
                <path d="M2 16h8l6-4M18 17l10-7" stroke="#b8d8e8" />
              </svg>
            </SearchBox>
            <AppButton aria-label="Task view"><svg width="18" height="16"><path d="M0 6h12v9H0z" fill="#808080" /><path d="M5 1h12v10H5z" fill="#e0e0e0" /></svg></AppButton>
            <AppButton aria-label="Edge">
              <svg width="18" height="24" viewBox="0 0 18 24">
                <circle cx="9" cy="12" r="8" fill="#1478c8" /><path d="M1 11a8 8 0 0 1 16 1c0 4-5 4-6 2c2-3-1-5-4-5c-3 0-5 1-6 2z" fill="#48d0a0" />
                <path d="M6 12c-1 4 3 7 8 6a8 8 0 0 1-7 2c-5-2-4-8-1-8z" fill="#0c4c98" /><path d="M7 23h4" stroke="#a0a0a0" strokeWidth="1.500" />
              </svg>
            </AppButton>
            <AppButton aria-label="Explorer">
              <svg width="18" height="24" viewBox="0 0 18 24">
                <path d="M1 4h6l2 2h8v13H1z" fill="#f8c840" /><path d="M4 13h10v6H4z" fill="#1c78c0" /><path d="M7 23h4" stroke="#a0a0a0" strokeWidth="1.500" />
              </svg>
            </AppButton>
            <AppButton aria-label="Opera"><svg width="16" height="16" fill="none" stroke="#b01030" strokeWidth="1.500"><circle cx="8" cy="8" r="7" /><ellipse cx="8" cy="8" rx="3.500" ry="6" /></svg></AppButton>
            <AppButton aria-label="Store">
              <svg width="16" height="17" viewBox="0 0 16 17">
                <path d="M5 4V1h6v3" fill="none" stroke="#60b0e8" /><rect y="3" width="16" height="13" rx="2" fill="#f0f0f0" />
                <path d="M5 6h3v3H5z" fill="#e05030" /><path d="M9 6h3v3H9z" fill="#60a830" /><path d="M5 10h3v3H5z" fill="#2080d0" /><path d="M9 10h3v3H9z" fill="#f0b020" />
              </svg>
            </AppButton>
            <AppButton aria-label="Discord">
              <svg width="20" height="24" viewBox="-1 0 20 24">
                <circle cx="9" cy="12" r="8" fill="#5060d8" /><path d="M5 15c0-3 0-5 2-6h4c2 1 2 3 2 6l-2 1-1-1H8l-1 1z" fill="#fff" />
                <circle cx="7.500" cy="12.500" r="1" fill="#5060d8" /><circle cx="10.500" cy="12.500" r="1" fill="#5060d8" />
                <circle cx="14.500" cy="5.500" r="4.500" fill="#d84858" /><text x="13" y="8" fontSize="7" fill="#fff">1</text><path d="M7 23h4" stroke="#a0a0a0" strokeWidth="1.500" />
              </svg>
            </AppButton>
            <AppButton aria-label="Monitor">
              <svg width="18" height="24" viewBox="0 0 18 24">
                <path d="M1 6h16v12H1z" fill="#1878b8" /><path d="M1 18v-7l3 2 2-4 3 5 2-5 2 3 2-3 2 4v5z" fill="#90e0f8" /><path d="M7 23h4" stroke="#a0a0a0" strokeWidth="1.500" />
              </svg>
            </AppButton>
            <AppButton aria-label="OBS">
              <svg width="20" height="24" viewBox="-1 0 20 24">
                <circle cx="9" cy="12" r="7.500" fill="#181818" stroke="#c8c8c8" /><path d="M9 12q-5-1-3-5M9 12q5-2 5 2M9 12q0 5-4 4" fill="none" stroke="#c8c8c8" strokeWidth="1.500" />
                <circle cx="15" cy="6" r="4" fill="#e00010" /><path d="M7 23h4" stroke="#a0a0a0" strokeWidth="1.500" />
              </svg>
            </AppButton>
            <AppButton $active aria-label="FL Studio">
              <svg width="18" height="24" viewBox="0 0 18 24">
                <circle cx="9" cy="12" r="8" fill="#282828" /><path d="M5 10q4-3 8 0q0 6-4 9q-4-4-4-9z" fill="#f09020" /><path d="M8 9l2-4 4 1-3 4z" fill="#60a830" /><path d="M4 23h10" stroke="#e87868" strokeWidth="2" />
              </svg>
            </AppButton>
          </Apps>
          <Tray>
            <ChevronUp size={11} />
            <svg width="13" height="12" viewBox="0 0 13 12"><path d="M1 8a3 3 0 0 1 2-5a4 4 0 0 1 7 2v4H3z" fill="#d8d8d8" /><circle cx="9" cy="8" r="3.500" fill="#c81030" /><path d="M8 7l2 2M10 7l-2 2" stroke="#fff" /></svg>
            <Mic size={12} color="#c87060" />
            <Wifi size={12} />
            <Volume2 size={12} />
            <DateAndAlerts>
              <time>1:33 AM<br />8/25/2026</time>
              <Bell size={11} fill="#f0f0f0" />
            </DateAndAlerts>
          </Tray>
        </Taskbar>
      </Page>
    </>
  );
}
